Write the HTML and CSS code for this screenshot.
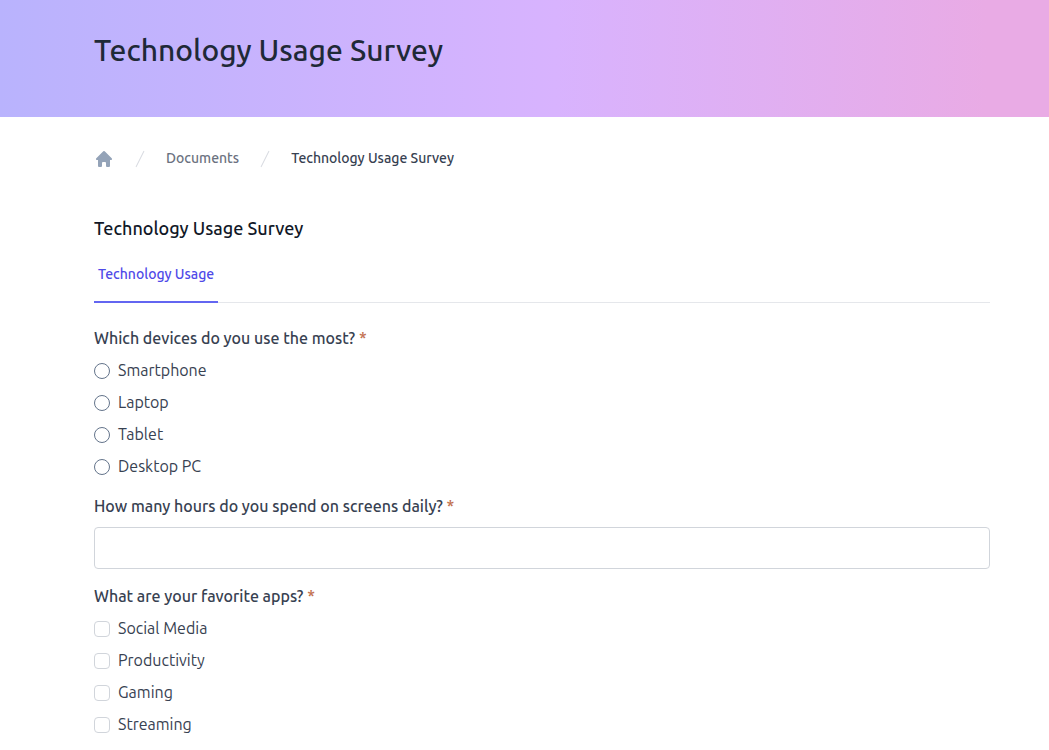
FILE: index.html
```html
<!DOCTYPE html>
<html lang="en">
<head>
<meta charset="utf-8">
<meta name="viewport" content="width=device-width, initial-scale=1">
<title>Technology Usage Survey</title>
<link rel="stylesheet" href="styles.css">
</head>
<body>
<header class="banner">
  <h1 class="banner-title">Technology Usage Survey</h1>
</header>
<main class="content">
  <nav class="breadcrumb" aria-label="Breadcrumb">
    <a class="crumb-home" href="#" aria-label="Home">
      <svg class="icon" viewBox="0 0 20 20" fill="currentColor" aria-hidden="true"><path fill-rule="evenodd" d="M9.293 2.293a1 1 0 011.414 0l7 7A1 1 0 0117 11h-1v6a1 1 0 01-1 1h-2a1 1 0 01-1-1v-3a1 1 0 00-1-1H9a1 1 0 00-1 1v3a1 1 0 01-1 1H5a1 1 0 01-1-1v-6H3a1 1 0 01-.707-1.707l7-7z" clip-rule="evenodd"/></svg>
    </a>
    <svg class="icon slash" viewBox="0 0 20 20" fill="currentColor" aria-hidden="true"><path d="M5.555 17.776l8-16 .894.448-8 16-.894-.448z"/></svg>
    <a class="crumb" href="#">Documents</a>
    <svg class="icon slash" viewBox="0 0 20 20" fill="currentColor" aria-hidden="true"><path d="M5.555 17.776l8-16 .894.448-8 16-.894-.448z"/></svg>
    <a class="crumb crumb-current" href="#" aria-current="page">Technology Usage Survey</a>
  </nav>
  <h2 class="form-title">Technology Usage Survey</h2>
  <div class="tabs" role="tablist">
    <button class="tab" type="button" role="tab" aria-selected="true">Technology Usage</button>
  </div>
  <form class="survey">
    <fieldset class="question">
      <legend class="question-label">Which devices do you use the most? <span class="required">*</span></legend>
      <label class="option"><input class="radio" type="radio" name="device"><span class="option-text">Smartphone</span></label>
      <label class="option"><input class="radio" type="radio" name="device"><span class="option-text">Laptop</span></label>
      <label class="option"><input class="radio" type="radio" name="device"><span class="option-text">Tablet</span></label>
      <label class="option"><input class="radio" type="radio" name="device"><span class="option-text">Desktop PC</span></label>
    </fieldset>
    <div class="question">
      <label class="question-label" for="hours">How many hours do you spend on screens daily? <span class="required">*</span></label>
      <input class="text-input" type="text" id="hours" name="hours">
    </div>
    <fieldset class="question">
      <legend class="question-label">What are your favorite apps? <span class="required">*</span></legend>
      <label class="option"><input class="checkbox" type="checkbox" name="apps"><span class="option-text">Social Media</span></label>
      <label class="option"><input class="checkbox" type="checkbox" name="apps"><span class="option-text">Productivity</span></label>
      <label class="option"><input class="checkbox" type="checkbox" name="apps"><span class="option-text">Gaming</span></label>
      <label class="option"><input class="checkbox" type="checkbox" name="apps"><span class="option-text">Streaming</span></label>
    </fieldset>
  </form>
</main>
</body>
</html>
```

FILE: styles.css
```css
*, *::before, *::after { box-sizing: border-box; }

body {
  margin: 0;
  background: #fff;
  color: #374151;
  font-family: Ubuntu, "Noto Sans", "Open Sans", sans-serif;
  font-size: 16px;
  line-height: 22px;
}

h1, h2 { margin: 0; font-weight: 500; }

.banner {
  padding: 32px 59px 49px 94px;
  background: linear-gradient(to right, #b9b3fd, #d8b3fe 53%, #e9abe5 94%);
}

.banner-title {
  color: #1f2937;
  font-size: 30px;
  line-height: 36px;
}

.content { padding: 32px 59px 8px 94px; }

.breadcrumb {
  display: flex;
  align-items: center;
  gap: 16px;
  font-size: 14px;
  line-height: 18px;
}

.icon { display: block; width: 20px; height: 20px; flex: none; }
.crumb-home { color: #94a3b8; }
.slash { color: #d9dce2; }
.crumb { padding-bottom: 2px; color: #6b7280; font-weight: 500; text-decoration: none; }
.crumb-current { color: #374151; }

.form-title {
  margin-top: 48px;
  color: #111827;
  font-size: 18px;
}

.tabs {
  display: flex;
  margin-top: 16px;
  border-bottom: 1px solid #e5e7eb;
}

.tab {
  margin-bottom: -1px;
  padding: 9px 4px 17px;
  border: 0;
  border-bottom: 2px solid #6366f1;
  background: none;
  color: #4f4ae8;
  font: inherit;
  font-weight: 500;
  font-size: 14px;
  line-height: 20px;
}

.survey { margin-top: 24px; }
.question { min-width: 0; margin: 0 0 16px; padding: 0; border: 0; }

.question-label {
  display: block;
  padding: 0 0 2px;
  font-weight: 500;
}

.required { color: #c2704f; }

.option {
  display: flex;
  align-items: center;
  gap: 8px;
  margin-top: 8px;
}

.option-text { padding-bottom: 2px; }

.radio, .checkbox {
  appearance: none;
  flex: none;
  width: 16px;
  height: 16px;
  margin: 0;
  border: 1px solid #64748b;
  border-radius: 50%;
  background: #fff;
}

.checkbox { border-color: #d1d5db; border-radius: 4px; }
.radio:checked { border: 5px solid #4f46e5; }
.checkbox:checked { border-color: #4f46e5; background: #4f46e5; }

.text-input {
  display: block;
  width: 100%;
  height: 42px;
  margin-top: 8px;
  padding: 8px 12px;
  border: 1px solid #d1d5db;
  border-radius: 4px;
  background: #fff;
  color: inherit;
  font: inherit;
}
```
